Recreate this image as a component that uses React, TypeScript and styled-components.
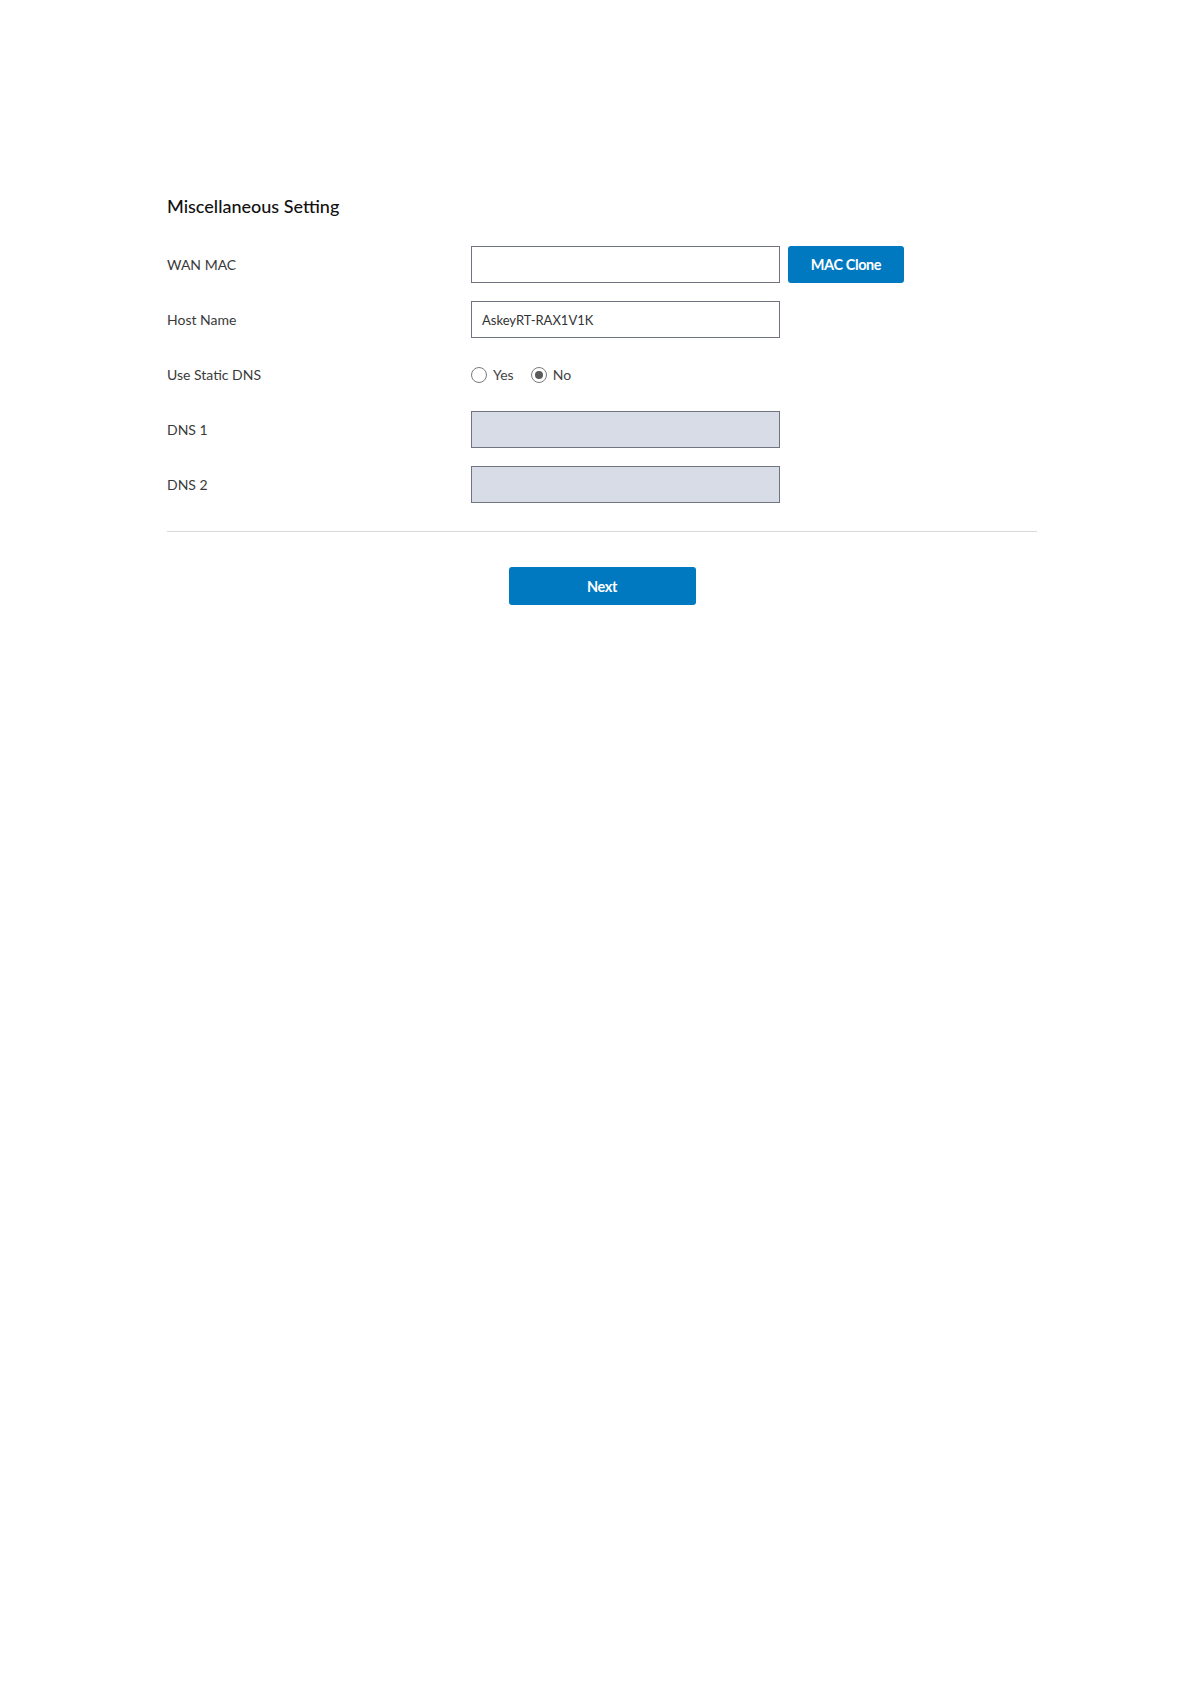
import React from 'react'
import styled, { createGlobalStyle } from 'styled-components'

const GlobalStyle = createGlobalStyle`
  html, body {
    margin: 0;
    padding: 0;
    background: #ffffff;
  }
  body {
    font-family: Lato, "Noto Sans", sans-serif;
    color: #333333;
  }
`

const Page = styled.div`
  width: 870px;
  margin-left: 167px;
  padding-top: 194px;
`

const Title = styled.h2`
  margin: 0 0 28px;
  font-size: 18px;
  line-height: 24px;
  font-weight: 500;
  color: #111111;
`

const Form = styled.div`
  display: flex;
  flex-direction: column;
  gap: 18px;
`

const Row = styled.div`
  display: flex;
  align-items: center;
  height: 37px;
`

const Label = styled.div`
  width: 304px;
  flex-shrink: 0;
  font-size: 14px;
  color: #3a3a3a;
`

const TextInput = styled.input<{ $disabled?: boolean }>`
  box-sizing: border-box;
  width: 309px;
  height: 37px;
  padding: 0 10px;
  border: 1px solid #6f7480;
  border-radius: 0;
  background: ${({ $disabled }) => ($disabled ? '#d8dce7' : '#ffffff')};
  font-family: Lato, "Noto Sans", sans-serif;
  font-size: 13px;
  color: #333333;
  outline: none;
`

const Button = styled.button<{ $wide?: boolean }>`
  box-sizing: border-box;
  height: ${({ $wide }) => ($wide ? '38px' : '37px')};
  width: ${({ $wide }) => ($wide ? '187px' : '116px')};
  border: none;
  border-radius: 3px;
  background: #0079c1;
  color: #ffffff;
  font-family: Lato, "Noto Sans", sans-serif;
  font-size: 14.5px;
  font-weight: 700;
  letter-spacing: -0.4px;
  cursor: pointer;
`

const CloneButton = styled(Button)`
  margin-left: 8px;
`

const RadioGroup = styled.div`
  display: flex;
  align-items: center;
  gap: 17px;
`

const RadioOption = styled.label`
  display: flex;
  align-items: center;
  gap: 6px;
  font-size: 14px;
  color: #444444;
`

const RadioCircle = styled.span<{ $checked?: boolean }>`
  box-sizing: border-box;
  width: 16px;
  height: 16px;
  border-radius: 50%;
  border: 1px solid #7a7a7a;
  display: flex;
  align-items: center;
  justify-content: center;
  &::after {
    content: '';
    width: 8px;
    height: 8px;
    border-radius: 50%;
    background: ${({ $checked }) => ($checked ? '#5a5a5a' : 'transparent')};
  }
`

const Divider = styled.hr`
  margin: 28px 0 35px;
  border: none;
  border-top: 1px solid #d9d9d9;
`

const Actions = styled.div`
  display: flex;
  justify-content: center;
`

export default function App() {
  return (
    <>
      <GlobalStyle />
      <Page>
        <Title>Miscellaneous Setting</Title>
        <Form>
          <Row>
            <Label>WAN MAC</Label>
            <TextInput defaultValue="" />
            <CloneButton>MAC Clone</CloneButton>
          </Row>
          <Row>
            <Label>Host Name</Label>
            <TextInput defaultValue="AskeyRT-RAX1V1K" />
          </Row>
          <Row>
            <Label>Use Static DNS</Label>
            <RadioGroup>
              <RadioOption>
                <RadioCircle />
                Yes
              </RadioOption>
              <RadioOption>
                <RadioCircle $checked />
                No
              </RadioOption>
            </RadioGroup>
          </Row>
          <Row>
            <Label>DNS 1</Label>
            <TextInput $disabled disabled />
          </Row>
          <Row>
            <Label>DNS 2</Label>
            <TextInput $disabled disabled />
          </Row>
        </Form>
        <Divider />
        <Actions>
          <Button $wide>Next</Button>
        </Actions>
      </Page>
    </>
  )
}
